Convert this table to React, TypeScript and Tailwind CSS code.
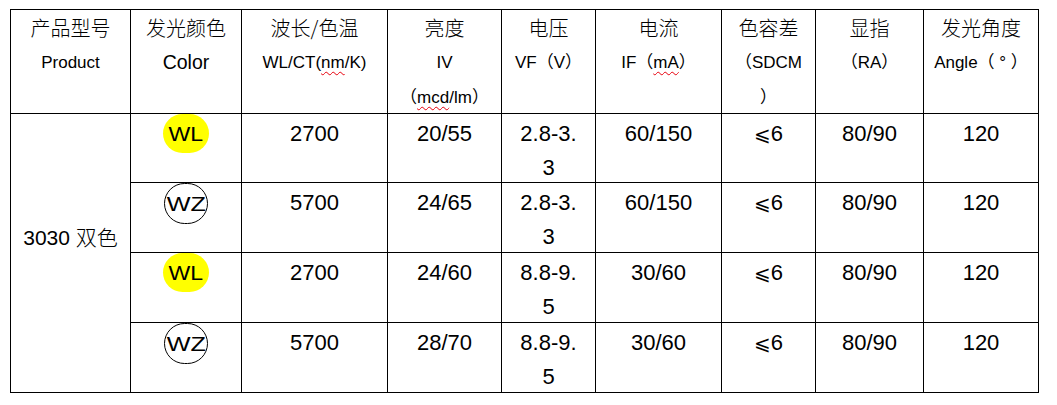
import React from "react";

type Row = {
  tag: "WL" | "WZ";
  wl: string;
  iv: string;
  vf: [string, string];
  ifa: string;
};

const rows: Row[] = [
  { tag: "WL", wl: "2700", iv: "20/55", vf: ["2.8-3.", "3"], ifa: "60/150" },
  { tag: "WZ", wl: "5700", iv: "24/65", vf: ["2.8-3.", "3"], ifa: "60/150" },
  { tag: "WL", wl: "2700", iv: "24/60", vf: ["8.8-9.", "5"], ifa: "30/60" },
  { tag: "WZ", wl: "5700", iv: "28/70", vf: ["8.8-9.", "5"], ifa: "30/60" },
];

const widths = [120, 111, 146, 114, 94, 126, 94, 108, 115];

const cjk = "font-['Noto_Sans_CJK_SC',sans-serif] font-light text-[20px]";
const en = "text-[17px]";
const squiggle = "underline decoration-wavy decoration-red-600 decoration-1 underline-offset-[3px]";

const Head = ({ zh, lines }: { zh: string; lines: React.ReactNode[] }) => (
  <th className="border-[1.5px] border-black p-0 align-top font-normal">
    <div className="h-[103px] leading-[35px] text-center">
      <div className={cjk}>{zh}</div>
      {lines.map((l, i) => (
        <div key={i} className={en}>
          {l}
        </div>
      ))}
    </div>
  </th>
);

const Cell = ({ h, children }: { h: number; children: React.ReactNode }) => (
  <td className="border-[1.5px] border-black p-0 align-top">
    <div className="pt-[3px] leading-[34px] text-center text-[22px]" style={{ height: h }}>
      {children}
    </div>
  </td>
);

const Tag = ({ tag }: { tag: "WL" | "WZ" }) =>
  tag === "WL" ? (
    <span className="mx-auto mt-[-3px] flex h-[39px] w-[46px] items-center justify-center rounded-full bg-[#ffff00] text-[21px] leading-none">
      <span className="inline-block scale-x-110">WL</span>
    </span>
  ) : (
    <span className="mx-auto mt-[-3px] flex h-[41px] w-[44px] items-center justify-center rounded-full border-[1.5px] border-black text-[21px] leading-none">
      <span className="inline-block scale-x-[1.2]">WZ</span>
    </span>
  );

export default function App() {
  return (
    <div className="min-h-[405px] w-[1057px] bg-white pl-[10px] pt-[9px] text-black font-['Liberation_Sans','Noto_Sans_CJK_SC',sans-serif]">
      <table className="table-fixed border-collapse w-[1029px]">
        <colgroup>
          {widths.map((w, i) => (
            <col key={i} style={{ width: w }} />
          ))}
        </colgroup>
        <thead>
          <tr>
            <Head zh="产品型号" lines={["Product"]} />
            <Head zh="发光颜色" lines={[<span className="text-[19.5px]">Color</span>]} />
            <Head
              zh="波长/色温"
              lines={[
                <>
                  WL/CT(<span className={squiggle}>nm</span>/K)
                </>,
              ]}
            />
            <Head
              zh="亮度"
              lines={[
                "IV",
                <>
                  （<span className={squiggle}>mcd</span>/lm）
                </>,
              ]}
            />
            <Head zh="电压" lines={["VF（V）"]} />
            <Head
              zh="电流"
              lines={[
                <>
                  IF（<span className={squiggle}>mA</span>）
                </>,
              ]}
            />
            <Head zh="色容差" lines={["（SDCM", "）"]} />
            <Head zh="显指" lines={["（RA）"]} />
            <Head zh="发光角度" lines={["Angle（ ° ）"]} />
          </tr>
        </thead>
        <tbody>
          {rows.map((r, i) => {
            const h = i === 0 ? 68 : 69;
            return (
              <tr key={i}>
                {i === 0 && (
                  <td rowSpan={4} className="border-[1.5px] border-black p-0 align-top">
                    <div className="pt-[105px] leading-[34px] text-center text-[21px]">
                      3030 <span className="font-['Noto_Sans_CJK_SC',sans-serif] font-light">双色</span>
                    </div>
                  </td>
                )}
                <Cell h={h}>
                  <Tag tag={r.tag} />
                </Cell>
                <Cell h={h}>{r.wl}</Cell>
                <Cell h={h}>{r.iv}</Cell>
                <Cell h={h}>
                  <div>{r.vf[0]}</div>
                  <div>{r.vf[1]}</div>
                </Cell>
                <Cell h={h}>{r.ifa}</Cell>
                <Cell h={h}>
                  <span className="font-['DejaVu_Sans',sans-serif] text-[20px]">⩽</span>6
                </Cell>
                <Cell h={h}>80/90</Cell>
                <Cell h={h}>120</Cell>
              </tr>
            );
          })}
        </tbody>
      </table>
    </div>
  );
}
